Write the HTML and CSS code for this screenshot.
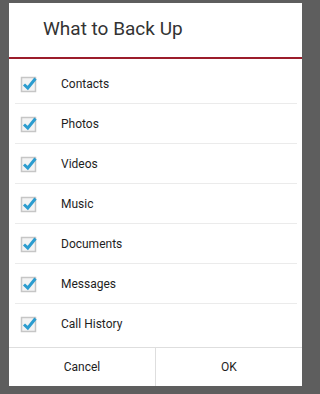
FILE: index.html
```html
<!DOCTYPE html>
<html>
<head>
<meta charset="utf-8">
<link rel="stylesheet" href="styles.css">
</head>
<body>
<div class="dialog">
  <div class="title">What to Back Up</div>
  <div class="list">
    <div class="row"><svg class="cb" viewBox="0 0 18 18"><rect x="1.5" y="2.5" width="14" height="14" fill="#f3f3f3" stroke="#c6c6c6" stroke-width="1.5"/><path d="M4 9.5 L7.8 13 L15.5 3.5" fill="none" stroke="#2b9ccf" stroke-width="3"/></svg><span>Contacts</span></div>
    <div class="row"><svg class="cb" viewBox="0 0 18 18"><rect x="1.5" y="2.5" width="14" height="14" fill="#f3f3f3" stroke="#c6c6c6" stroke-width="1.5"/><path d="M4 9.5 L7.8 13 L15.5 3.5" fill="none" stroke="#2b9ccf" stroke-width="3"/></svg><span>Photos</span></div>
    <div class="row"><svg class="cb" viewBox="0 0 18 18"><rect x="1.5" y="2.5" width="14" height="14" fill="#f3f3f3" stroke="#c6c6c6" stroke-width="1.5"/><path d="M4 9.5 L7.8 13 L15.5 3.5" fill="none" stroke="#2b9ccf" stroke-width="3"/></svg><span>Videos</span></div>
    <div class="row"><svg class="cb" viewBox="0 0 18 18"><rect x="1.5" y="2.5" width="14" height="14" fill="#f3f3f3" stroke="#c6c6c6" stroke-width="1.5"/><path d="M4 9.5 L7.8 13 L15.5 3.5" fill="none" stroke="#2b9ccf" stroke-width="3"/></svg><span>Music</span></div>
    <div class="row"><svg class="cb" viewBox="0 0 18 18"><rect x="1.5" y="2.5" width="14" height="14" fill="#f3f3f3" stroke="#c6c6c6" stroke-width="1.5"/><path d="M4 9.5 L7.8 13 L15.5 3.5" fill="none" stroke="#2b9ccf" stroke-width="3"/></svg><span>Documents</span></div>
    <div class="row"><svg class="cb" viewBox="0 0 18 18"><rect x="1.5" y="2.5" width="14" height="14" fill="#f3f3f3" stroke="#c6c6c6" stroke-width="1.5"/><path d="M4 9.5 L7.8 13 L15.5 3.5" fill="none" stroke="#2b9ccf" stroke-width="3"/></svg><span>Messages</span></div>
    <div class="row"><svg class="cb" viewBox="0 0 18 18"><rect x="1.5" y="2.5" width="14" height="14" fill="#f3f3f3" stroke="#c6c6c6" stroke-width="1.5"/><path d="M4 9.5 L7.8 13 L15.5 3.5" fill="none" stroke="#2b9ccf" stroke-width="3"/></svg><span>Call History</span></div>
  </div>
  <div class="buttons">
    <div class="btn">Cancel</div>
    <div class="btn">OK</div>
  </div>
</div>
</body>
</html>
```
FILE: styles.css
```css
html, body {
  margin: 0;
  padding: 0;
  background: #5e5e5e;
  width: 313px;
  height: 394px;
  overflow: hidden;
  font-family: Roboto, "Liberation Sans", sans-serif;
}
.dialog {
  margin: 3px 0 0 9px;
  width: 293px;
  height: 383px;
  background: #ffffff;
  display: flex;
  flex-direction: column;
}
.title {
  height: 56px;
  box-sizing: border-box;
  padding: 15px 0 0 34px;
  font-size: 19px;
  line-height: 22px;
  color: #333333;
  border-bottom: 2px solid #9c1d2b;
}
.list {
  padding: 5px 5px 3px 6px;
  border-bottom: 1px solid #dedede;
}
.row {
  height: 40px;
  box-sizing: border-box;
  display: flex;
  align-items: center;
  border-bottom: 1px solid #ebebeb;
}
.row:last-child {
  border-bottom: none;
}
.cb {
  width: 18px;
  height: 18px;
  margin: 0 0 0 5px;
  flex: none;
}
.row span {
  margin-left: 23px;
  font-size: 12px;
  color: #1e1e1e;
}
.buttons {
  flex: 1;
  display: flex;
}
.btn {
  flex: 1;
  display: flex;
  align-items: center;
  justify-content: center;
  font-size: 12px;
  color: #1e1e1e;
}
.btn + .btn {
  border-left: 1px solid #dedede;
}
```
